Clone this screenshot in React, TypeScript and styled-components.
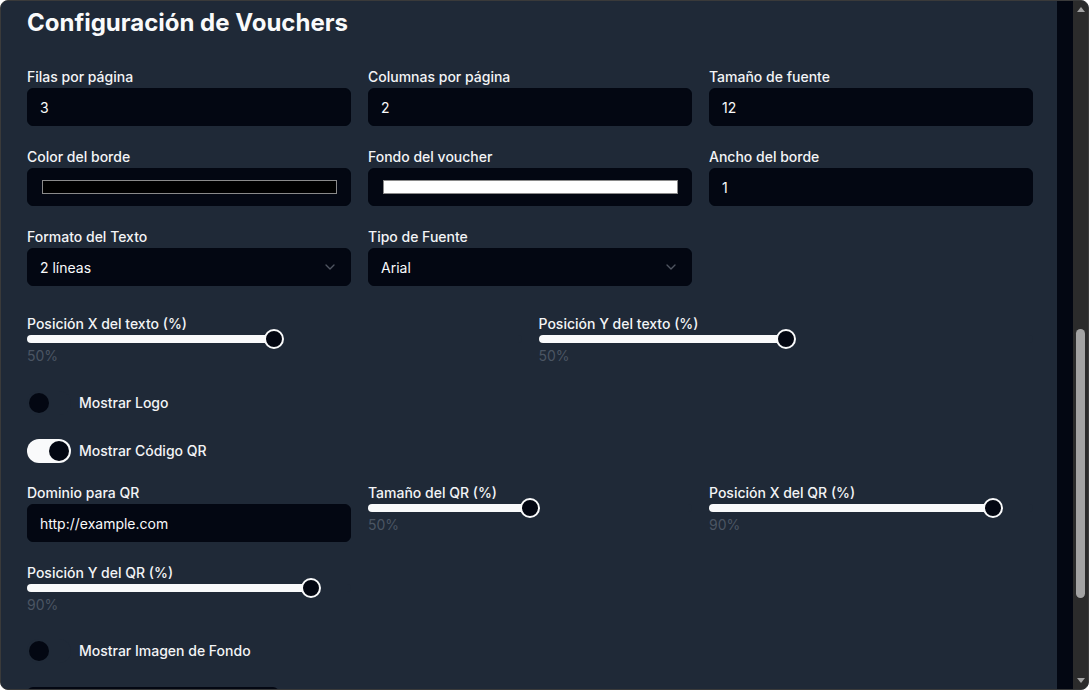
import React from "react";
import styled, { createGlobalStyle } from "styled-components";
import { ChevronDown } from "lucide-react";

const GlobalStyle = createGlobalStyle`
  *, *::before, *::after { box-sizing: border-box; }
  html, body { margin: 0; padding: 0; background: #ffffff; }
  body { font-family: Inter, "Noto Sans", sans-serif; overflow: hidden; }
`;

const Frame = styled.div`
  width: 1089px;
  height: 690px;
  display: flex;
  border: 1px solid #3a3a3a;
  border-radius: 8px;
  overflow: hidden;
  background: #1f2937;
`;

const Main = styled.main`
  flex: 1;
  min-width: 0;
  background: #1f2937;
  padding: 6px 24px 0 26px;
  overflow: hidden;
  display: flex;
  flex-direction: column;
`;

const Gutter = styled.div`
  width: 16px;
  flex-shrink: 0;
  background: #030712;
`;

const ScrollBar = styled.div`
  width: 15px;
  flex-shrink: 0;
  background: #2b2b2b;
  display: flex;
  flex-direction: column;
`;

const ScrollArrow = styled.div`
  height: 17px;
  display: flex;
  align-items: center;
  justify-content: center;
  flex-shrink: 0;
`;

const ScrollTrack = styled.div`
  flex: 1;
  padding-top: 311px;
  display: flex;
  justify-content: center;
`;

const ScrollThumb = styled.div`
  width: 9px;
  height: 269px;
  border-radius: 5px;
  background: #a3a3a3;
`;

const Title = styled.h2`
  margin: 0 0 28px;
  font-size: 24px;
  line-height: 32px;
  font-weight: 700;
  color: #f9fafb;
`;

const Grid = styled.div<{ $cols: number; $mt?: number }>`
  display: grid;
  grid-template-columns: repeat(${(p) => p.$cols}, minmax(0, 1fr));
  column-gap: 17px;
  row-gap: 21px;
  margin-top: ${(p) => p.$mt ?? 0}px;
`;

const Field = styled.div`
  display: flex;
  flex-direction: column;
  min-width: 0;
`;

const Label = styled.label`
  display: block;
  font-size: 14px;
  line-height: 20px;
  font-weight: 500;
  color: #f3f4f6;
  margin-bottom: 1px;
`;

const InputBox = styled.div`
  height: 38px;
  background: #030712;
  border: 1px solid #030712;
  border-radius: 6px;
  padding: 0 12px;
  display: flex;
  align-items: center;
  font-size: 14px;
  color: #f9fafb;
`;

const SelectBox = styled(InputBox)`
  justify-content: space-between;
  & svg {
    color: #9ca3af;
    opacity: 0.5;
    flex-shrink: 0;
  }
`;

const ColorBox = styled(InputBox)`
  padding: 0 13px 0 14px;
`;

const Swatch = styled.div<{ $color: string }>`
  flex: 1;
  height: 14px;
  background: ${(p) => p.$color};
  border: 1px solid #8a8a8a;
`;

const SliderWrap = styled.div`
  display: flex;
  flex-direction: column;
  min-width: 0;
`;

const SliderLabel = styled.span`
  font-size: 14px;
  line-height: 20px;
  font-weight: 500;
  color: #f3f4f6;
`;

const Track = styled.div`
  position: relative;
  height: 8px;
  margin-top: 1px;
  border-radius: 4px;
  background: #1f2937;
`;

const Fill = styled.div`
  height: 100%;
  border-radius: 4px;
  background: #f9fafb;
`;

const Thumb = styled.div`
  position: absolute;
  top: -6px;
  width: 20px;
  height: 20px;
  border-radius: 50%;
  background: #030712;
  border: 2px solid #f9fafb;
`;

const SliderValue = styled.span`
  margin-top: 3px;
  font-size: 14px;
  line-height: 20px;
  color: #4b5563;
`;

const ToggleRow = styled.div<{ $mt: number }>`
  display: flex;
  align-items: center;
  gap: 8px;
  margin-top: ${(p) => p.$mt}px;
`;

const SwitchTrack = styled.button<{ $on: boolean }>`
  width: 44px;
  height: 24px;
  padding: 2px;
  border: none;
  border-radius: 12px;
  display: flex;
  justify-content: ${(p) => (p.$on ? "flex-end" : "flex-start")};
  align-items: center;
  background: ${(p) => (p.$on ? "#f9fafb" : "#1f2937")};
  cursor: pointer;
  flex-shrink: 0;
`;

const SwitchThumb = styled.span`
  width: 20px;
  height: 20px;
  border-radius: 50%;
  background: #030712;
`;

const ToggleLabel = styled.span`
  font-size: 14px;
  line-height: 20px;
  font-weight: 500;
  color: #f3f4f6;
`;

const FileBox = styled.div`
  margin-top: 24px;
  width: 252px;
  height: 38px;
  flex-shrink: 0;
  background: #030712;
  border-radius: 6px;
`;

function Slider({ label, value }: { label: string; value: number }) {
  const p = value / 100;
  return (
    <SliderWrap>
      <SliderLabel>{label}</SliderLabel>
      <Track role="slider" aria-valuenow={value} aria-label={label}>
        <Fill style={{ width: `calc(10px + (100% - 20px) * ${p})` }} />
        <Thumb style={{ left: `calc((100% - 20px) * ${p})` }} />
      </Track>
      <SliderValue>{value}%</SliderValue>
    </SliderWrap>
  );
}

function TextField({ label, value }: { label: string; value: string }) {
  return (
    <Field>
      <Label>{label}</Label>
      <InputBox>{value}</InputBox>
    </Field>
  );
}

function ColorField({ label, color }: { label: string; color: string }) {
  return (
    <Field>
      <Label>{label}</Label>
      <ColorBox>
        <Swatch $color={color} />
      </ColorBox>
    </Field>
  );
}

function SelectField({ label, value }: { label: string; value: string }) {
  return (
    <Field>
      <Label>{label}</Label>
      <SelectBox>
        <span>{value}</span>
        <ChevronDown size={16} strokeWidth={2} />
      </SelectBox>
    </Field>
  );
}

function Toggle({ label, on, mt }: { label: string; on: boolean; mt: number }) {
  return (
    <ToggleRow $mt={mt}>
      <SwitchTrack $on={on} role="switch" aria-checked={on}>
        <SwitchThumb />
      </SwitchTrack>
      <ToggleLabel>{label}</ToggleLabel>
    </ToggleRow>
  );
}

function Arrow({ up }: { up: boolean }) {
  return (
    <ScrollArrow>
      <svg width="8" height="5" viewBox="0 0 8 5">
        <polygon points={up ? "0,5 4,0 8,5" : "0,0 8,0 4,5"} fill="#a3a3a3" />
      </svg>
    </ScrollArrow>
  );
}

export default function App() {
  return (
    <>
      <GlobalStyle />
      <Frame>
        <Main>
          <Title>Configuración de Vouchers</Title>
          <Grid $cols={3}>
            <TextField label="Filas por página" value="3" />
            <TextField label="Columnas por página" value="2" />
            <TextField label="Tamaño de fuente" value="12" />
            <ColorField label="Color del borde" color="#000000" />
            <ColorField label="Fondo del voucher" color="#ffffff" />
            <TextField label="Ancho del borde" value="1" />
            <SelectField label="Formato del Texto" value="2 líneas" />
            <SelectField label="Tipo de Fuente" value="Arial" />
          </Grid>
          <Grid $cols={2} $mt={28}>
            <Slider label="Posición X del texto (%)" value={50} />
            <Slider label="Posición Y del texto (%)" value={50} />
          </Grid>
          <Toggle label="Mostrar Logo" on={false} mt={25} />
          <Toggle label="Mostrar Código QR" on={true} mt={24} />
          <Grid $cols={3} $mt={20}>
            <TextField label="Dominio para QR" value="http://example.com" />
            <Slider label="Tamaño del QR (%)" value={50} />
            <Slider label="Posición X del QR (%)" value={90} />
            <Slider label="Posición Y del QR (%)" value={90} />
          </Grid>
          <Toggle label="Mostrar Imagen de Fondo" on={false} mt={24} />
          <FileBox />
        </Main>
        <Gutter />
        <ScrollBar>
          <Arrow up={true} />
          <ScrollTrack>
            <ScrollThumb />
          </ScrollTrack>
          <Arrow up={false} />
        </ScrollBar>
      </Frame>
    </>
  );
}
